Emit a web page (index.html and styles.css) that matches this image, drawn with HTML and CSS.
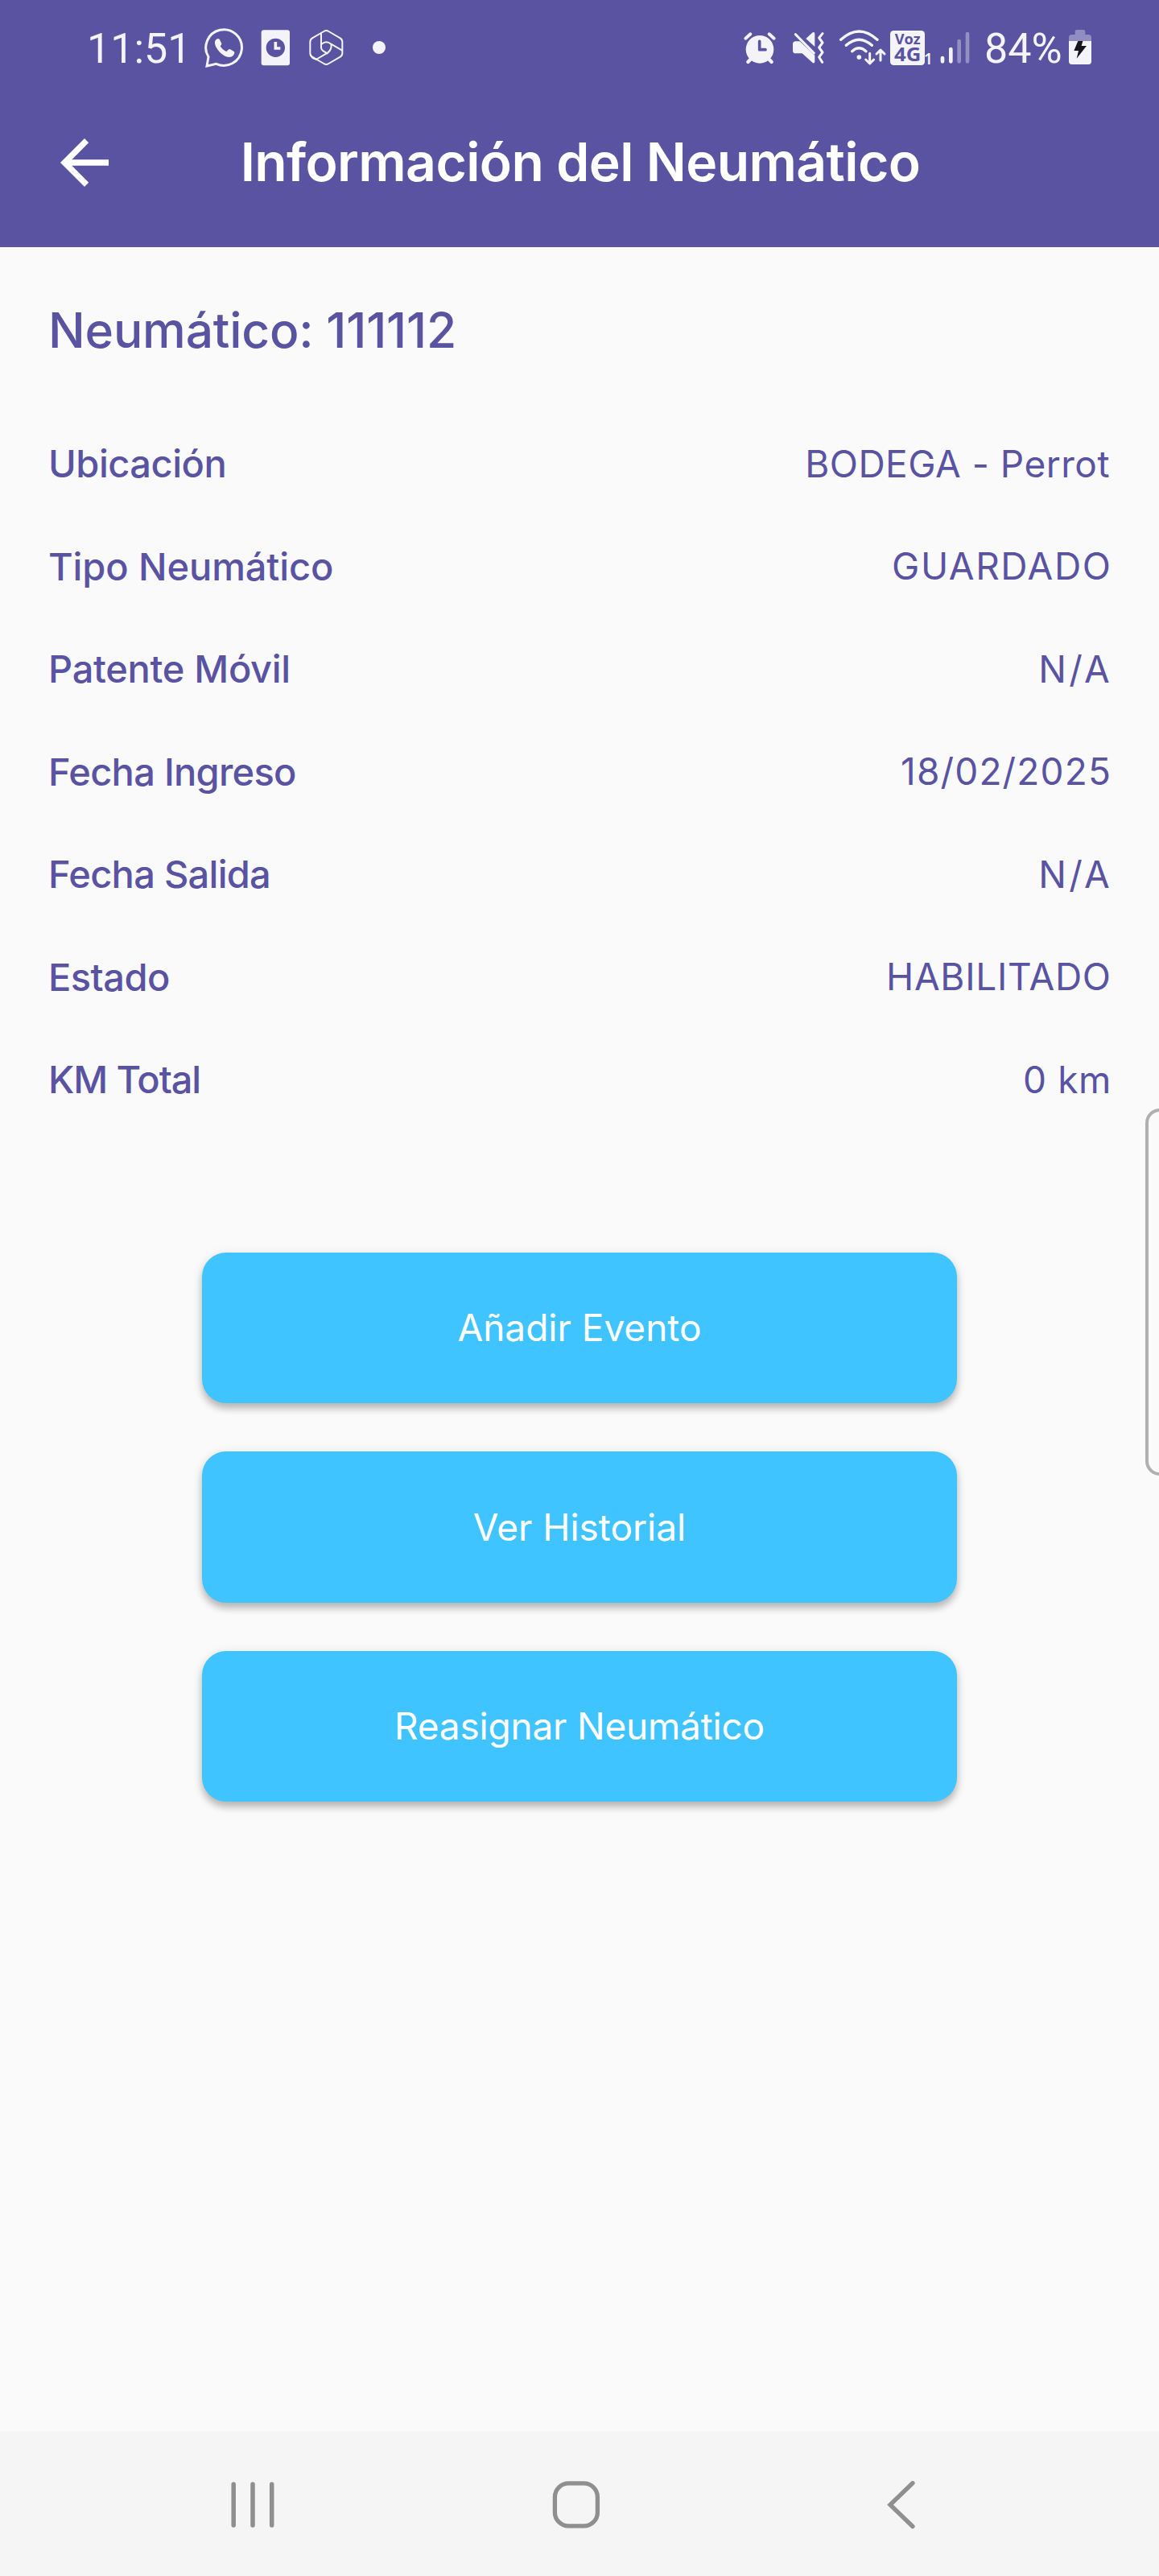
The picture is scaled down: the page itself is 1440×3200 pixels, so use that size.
FILE: index.html
```html
<!DOCTYPE html>
<html lang="es">
<head>
<meta charset="utf-8">
<title>Información del Neumático</title>
<link rel="stylesheet" href="styles.css">
</head>
<body>
<div class="screen">
  <header class="header">
    <div class="status">
      <div class="status-group">
        <span class="clock">11:51</span>
        <svg class="ic whatsapp" width="54" height="60" viewBox="486 30 162 180">
          <path d="M507 152A67 67 0 1 1 536 178L501 186Z" fill="none" stroke="#f4f3fa" stroke-width="9" stroke-linejoin="miter"/>
          <path d="M532 92Q537 82 546 85Q549 86 551 92L556 102Q557 106 551 112Q559 126 574 132L581 125Q584 122 588 124L601 131Q606 134 603 141Q598 153 583 153Q566 151 549 134Q533 117 531 102Q530 96 532 92Z" fill="#f4f3fa"/>
        </svg>
        <svg class="ic outlook" width="40" height="60" viewBox="696 30 120 180">
          <rect x="704" y="52" width="106" height="132" rx="9" fill="#f4f3fa"/>
          <circle cx="757" cy="118" r="35" fill="#5953a2"/>
          <path d="M757 96V120H775" fill="none" stroke="#f4f3fa" stroke-width="11"/>
        </svg>
        <svg class="ic hexa" width="46" height="60" viewBox="876 30 138 180">
          <g fill="none" stroke="#f4f3fa" stroke-width="6" stroke-linejoin="round" stroke-linecap="round">
            <path d="M937 57Q946 51 955 57L998 82Q1006 87 1006 96V138Q1006 147 998 152L955 177Q946 183 937 177L894 152Q886 147 886 138V96Q886 87 894 82Z"/>
            <path d="M927 64V118Q928 126 935 130L950 139M929 104Q946 90 964 104L1005 128M964 104Q968 124 952 136L908 162M888 147Q898 162 910 160"/>
          </g>
        </svg>
        <svg class="ic dot" width="18" height="60" viewBox="1116 30 54 180"><circle cx="1143" cy="117" r="24" fill="#f4f3fa"/></svg>
      </div>
      <div class="status-group">
        <svg class="ic" width="44" height="60" viewBox="66 30 132 180">
          <circle cx="132" cy="124" r="52" fill="#f4f3fa"/>
          <path d="M79 83L97 67M185 83L167 67" stroke="#f4f3fa" stroke-width="12" stroke-linecap="round"/>
          <path d="M88 171L100 158M176 171L164 158" stroke="#f4f3fa" stroke-width="13" stroke-linecap="round"/>
          <path d="M131 94V125H153" fill="none" stroke="#5953a2" stroke-width="11" stroke-linecap="round" stroke-linejoin="round"/>
        </svg>
        <svg class="ic mute" width="44" height="60" viewBox="246 30 132 180">
          <path d="M266 94H281L337 146V170Q336 178 329 174L290 139H266Q255 139 255 128V105Q255 94 266 94Z" fill="#f4f3fa"/>
          <path d="M304 84L329 61Q337 57 337 66V114Z" fill="#f4f3fa"/>
          <path d="M265 68L334 138" stroke="#f4f3fa" stroke-width="9" stroke-linecap="round"/>
          <path d="M366 65L353 81L366 99L353 117L366 135L353 153L365 172" fill="none" stroke="#f4f3fa" stroke-width="9" stroke-linecap="round" stroke-linejoin="round"/>
        </svg>
        <svg class="ic wifi" width="60" height="60" viewBox="426 30 180 180">
          <g fill="none" stroke="#f4f3fa" stroke-width="10" stroke-linecap="round" stroke-linejoin="round">
            <path d="M434 88Q502 26 570 88M454 109Q502 66 550 109M476 131Q502 108 528 131"/>
            <path d="M542 139V174M527 162L542 177L557 162M582 165V130M567 141L582 126L597 141" stroke-width="9"/>
          </g>
          <circle cx="502" cy="153" r="8.500" fill="#f4f3fa"/>
        </svg>
        <svg class="ic volte" width="54" height="60" viewBox="612 30 162 180">
          <rect x="618" y="54" width="129" height="129" rx="13" fill="#f4f3fa"/>
          <text class="volte-voz" x="635" y="105" textLength="96" lengthAdjust="spacingAndGlyphs">Voz</text>
          <text class="volte-4g" x="633" y="169" textLength="100" lengthAdjust="spacingAndGlyphs">4G</text>
          <text class="volte-sim" x="743" y="181">1</text>
        </svg>
        <svg class="ic signal" width="40" height="60" viewBox="798 30 120 180">
          <g stroke="#f4f3fa" stroke-width="14" stroke-linecap="round">
            <path d="M813 156V169M844 123V169"/>
            <path d="M875 93V169M906 66V169" opacity=".38"/>
          </g>
        </svg>
        <span class="percent">84%</span>
        <svg class="ic" width="32" height="60" viewBox="1278 30 96 180">
          <path d="M1284 94V80Q1284 69 1295 69H1307V58Q1307 51 1314 51H1338Q1345 51 1345 58V69H1357Q1368 69 1368 80V94Z" fill="#918dc3"/>
          <path d="M1284 93H1368V169Q1368 180 1357 180H1295Q1284 180 1284 169Z" fill="#f4f3fa"/>
          <path d="M1318 93H1336L1331 111H1350L1313 158L1320 129H1303Z" fill="#17161f"/>
        </svg>
      </div>
    </div>
    <div class="appbar">
      <svg class="back" width="60" height="60" viewBox="0 0 60 60"><path d="M60 26.300H14.300L35.200 5.200L30 0L0 30L30 60L35.200 54.800L14.300 33.700H60Z" fill="#fff"/></svg>
      <h1 class="title">Información del Neumático</h1>
    </div>
  </header>

  <main class="content">
    <h2 class="heading">Neumático: 111112</h2>
    <dl class="details">
      <div class="row"><dt class="l-place">Ubicación</dt><dd class="place">BODEGA - Perrot</dd></div>
      <div class="row"><dt class="l-kind">Tipo Neumático</dt><dd class="kind">GUARDADO</dd></div>
      <div class="row"><dt class="l-plate">Patente Móvil</dt><dd class="none">N/A</dd></div>
      <div class="row"><dt class="l-date">Fecha Ingreso</dt><dd class="date">18/02/2025</dd></div>
      <div class="row"><dt class="l-date">Fecha Salida</dt><dd class="none">N/A</dd></div>
      <div class="row"><dt class="l-state">Estado</dt><dd class="state">HABILITADO</dd></div>
      <div class="row"><dt class="l-km">KM Total</dt><dd class="km">0 km</dd></div>
    </dl>
    <div class="actions">
      <button class="action">Añadir Evento</button>
      <button class="action">Ver Historial</button>
      <button class="action action-long">Reasignar Neumático</button>
    </div>
  </main>

  <nav class="navbar">
    <svg class="nav-recents" width="60" height="70" viewBox="0 0 60 70"><path d="M6.200 9V60M30 9V60M53.700 9V60" stroke="#8f8f8f" stroke-width="5.500" stroke-linecap="round"/></svg>
    <svg class="nav-home" width="60" height="70" viewBox="0 0 60 70"><rect x="3.400" y="7.900" width="53" height="53" rx="17" fill="none" stroke="#8f8f8f" stroke-width="5.300"/></svg>
    <svg class="nav-back" width="60" height="70" viewBox="0 0 60 70"><path d="M45 7.500L17 34.500L45 61.500" fill="none" stroke="#8f8f8f" stroke-width="5.300" stroke-linecap="round" stroke-linejoin="miter"/></svg>
  </nav>
  <div class="edge-handle"></div>
</div>
</body>
</html>
```
FILE: styles.css
```css
* { box-sizing: border-box; }

body {
  margin: 0;
  font-family: "Inter", sans-serif;
  color: #5953a2;
}

.screen {
  position: relative;
  display: flex;
  flex-direction: column;
  width: 1440px;
  height: 3200px;
  overflow: hidden;
  background: #fafafa;
}

svg { display: block; flex: none; }

/* Header: status bar and title bar */
.header {
  height: 307px;
  background: #5953a2;
  color: #fff;
}

.status {
  display: flex;
  justify-content: space-between;
  height: 120px;
  padding: 0 82px 0 108px;
  color: #f4f3fa;
  font-family: "Roboto", sans-serif;
  font-size: 52px;
  line-height: 117px;
}

.status-group { display: flex; align-items: center; }
.clock { width: 144px; }
.percent { width: 120px; padding-left: 17px; white-space: nowrap; }
.outlook { margin-left: 16px; }
.hexa { margin-left: 20px; }
.dot { margin-left: 34px; }
.mute, .wifi { margin-left: 16px; }
.volte { margin-left: 2px; }
.signal { margin-left: 8px; }

.volte text { font-family: "Open Sans", sans-serif; font-weight: 700; fill: #5953a2; }
.volte .volte-voz { font-size: 52px; }
.volte .volte-4g { font-size: 71px; }
.volte .volte-sim { font-weight: 600; font-size: 60px; fill: #f4f3fa; }

.appbar {
  display: flex;
  align-items: center;
  height: 162px;
  padding: 0 75px;
}

.back { margin-top: 2px; }

.title {
  flex: 1;
  margin: 0 58px 0 0;
  text-align: center;
  font-size: 66px;
  font-weight: 600;
  letter-spacing: -0.62px;
}

/* Tyre details */
.content { flex: 1; padding: 63px 61px 0 60px; }

.heading {
  margin: 0 0 61.75px;
  font-size: 60.5px;
  font-weight: 500;
  line-height: 80px;
  letter-spacing: -0.2px;
}

.details { margin: 0; }

.row {
  display: flex;
  align-items: center;
  justify-content: space-between;
  height: 127.5px;
}

dt { font-size: 47px; font-weight: 500; }
dd { margin: 0; font-size: 46px; font-weight: 400; }

.l-place { letter-spacing: -0.48px; }
.l-kind { letter-spacing: -0.1px; }
.l-plate { letter-spacing: -0.3px; }
.l-date { letter-spacing: -0.72px; }
.l-state { letter-spacing: -0.52px; }
.l-km { letter-spacing: -1.1px; }

.place { letter-spacing: 0.5px; }
.kind { margin-right: -2.5px; letter-spacing: 1.6px; }
.none { margin-right: -3px; letter-spacing: 3.3px; }
.date { margin-right: -2px; letter-spacing: 1.15px; }
.state { margin-right: -1.7px; letter-spacing: 0.7px; }
.km { margin-right: -2px; letter-spacing: 0.6px; }

/* Action buttons */
.actions {
  display: flex;
  flex-direction: column;
  gap: 60px;
  width: 938px;
  margin: 151.25px 0 0 191px;
}

.action {
  height: 187.5px;
  padding: 0;
  border: 0;
  border-radius: 30px;
  background: #40c4ff;
  box-shadow: 0 7px 8px rgba(0, 0, 0, .2), 0 3px 14px rgba(0, 0, 0, .12);
  color: #fff;
  font: 400 46px "Inter", sans-serif;
}

.action-long { letter-spacing: -0.2px; }

/* System navigation */
.navbar {
  display: flex;
  align-items: center;
  height: 180px;
  padding: 4px 0 0 283.5px;
  background: #f5f5f5;
}

.nav-home { margin-left: 342px; }
.nav-back { margin-left: 343px; }

.edge-handle {
  position: absolute;
  top: 1377px;
  right: -20px;
  width: 37px;
  height: 456px;
  border: 4px solid #b0b0b0;
  border-radius: 18px;
  background: #fafafa;
}
```
